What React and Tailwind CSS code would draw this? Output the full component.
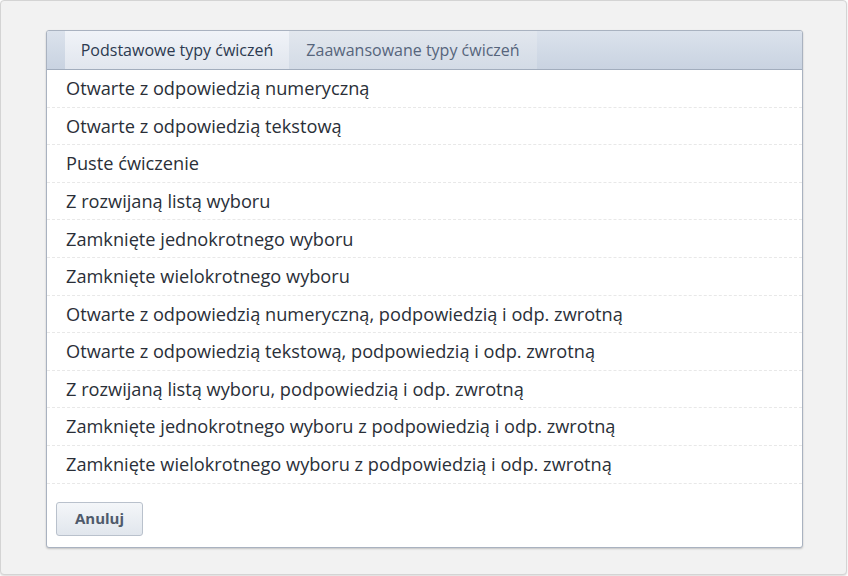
const ITEMS = [
  'Otwarte z odpowiedzią numeryczną',
  'Otwarte z odpowiedzią tekstową',
  'Puste ćwiczenie',
  'Z rozwijaną listą wyboru',
  'Zamknięte jednokrotnego wyboru',
  'Zamknięte wielokrotnego wyboru',
  'Otwarte z odpowiedzią numeryczną, podpowiedzią i odp. zwrotną',
  'Otwarte z odpowiedzią tekstową, podpowiedzią i odp. zwrotną',
  'Z rozwijaną listą wyboru, podpowiedzią i odp. zwrotną',
  'Zamknięte jednokrotnego wyboru z podpowiedzią i odp. zwrotną',
  'Zamknięte wielokrotnego wyboru z podpowiedzią i odp. zwrotną',
];

export default function App() {
  return (
    <div className="w-[848px] h-[576px] bg-white" style={{ fontFamily: '"Open Sans", sans-serif' }}>
      <div className="w-[847px] h-[575px] bg-[#f2f2f2] border border-[#d4d4d4] rounded-[4px] shadow-[0_1px_2px_rgba(0,0,0,0.15)] pt-[29px] pl-[45px]">
        <div className="w-[757px] h-[518px] bg-white border border-[#a9b2c0] rounded-[3px] shadow-[0_1px_2px_rgba(0,0,0,0.2)] flex flex-col">
          <div className="h-[39px] flex pl-[18px] bg-gradient-to-b from-[#dbe2ec] to-[#c9d3e1] border-b border-[#a2adbd] rounded-t-[2px]">
            <div className="w-[224px] flex items-center justify-center bg-gradient-to-b from-[#f0f3f8] to-[#e1e6ee] text-[16px] text-[#2c3a50]">
              Podstawowe typy ćwiczeń
            </div>
            <div className="w-[248px] flex items-center justify-center bg-gradient-to-b from-[#e2e7ee] to-[#d3dbe6] text-[16px] text-[#56657c]">
              Zaawansowane typy ćwiczeń
            </div>
          </div>
          <div className="flex flex-col">
            {ITEMS.map((t) => (
              <div key={t} className="h-[37.6px] flex items-center pt-[1px] px-[19px] border-b border-dashed border-[#e8e8e8] text-[18.2px] text-[#2a2f38]">
                {t}
              </div>
            ))}
          </div>
          <div className="pl-[9px] pt-[18px]">
            <button className="w-[87px] h-[34px] rounded-[3px] border border-[#b9c1cc] bg-gradient-to-b from-[#f4f6f9] to-[#e1e6ed] text-[15px] font-bold text-[#4f5a6b]">
              Anuluj
            </button>
          </div>
        </div>
      </div>
    </div>
  );
}
